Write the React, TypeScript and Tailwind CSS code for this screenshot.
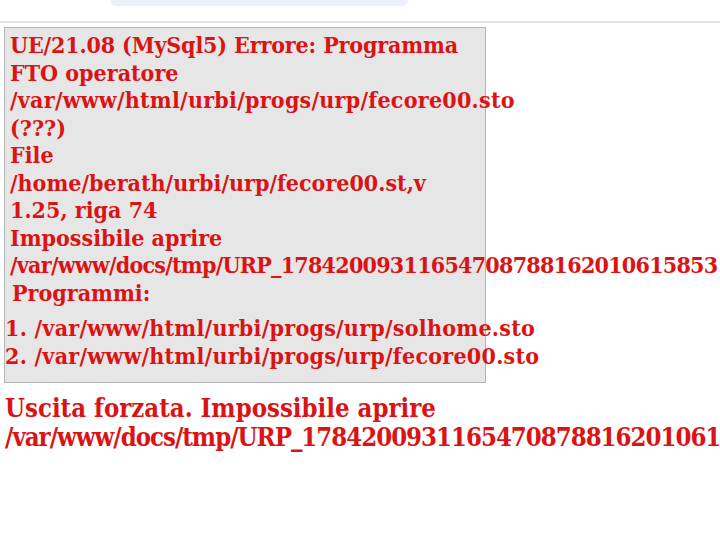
import React from "react";

export default function App() {
  const lines = [
    { t: "UE/21.08 (MySql5) Errore: Programma", c: "tracking-[-0.15px]" },
    { t: "FTO operatore", c: "" },
    { t: "/var/www/html/urbi/progs/urp/fecore00.sto", c: "tracking-[0.25px]" },
    { t: "(???)", c: "" },
    { t: "File", c: "" },
    { t: "/home/berath/urbi/urp/fecore00.st,v", c: "" },
    { t: "1.25, riga 74", c: "" },
    { t: "Impossibile aprire", c: "" },
    { t: "/var/www/docs/tmp/URP_17842009311654708788162010615853", c: "tracking-[-0.75px]" },
  ];

  return (
    <div className="w-[720px] h-[533px] overflow-hidden bg-white font-['DejaVu_Serif_Condensed','DejaVu_Serif',serif] font-bold text-[#da1414]">
      {/* browser chrome remnant */}
      <div className="h-[23px] border-b-2 border-[#e4e4e4] flex">
        <div className="ml-[110px] w-[298px] h-[6px] rounded-b-[14px] bg-[#edf0f8]" />
      </div>

      <div className="mt-[4px] ml-[4px] w-[482px] h-[356px] bg-[#e6e6e6] border border-[#b4b4b4] pt-[3px] whitespace-nowrap text-[23px] leading-[27.5px]">
        <div className="pl-[5px]">
          {lines.map((l, i) => (
            <div key={i} className={l.c}>
              {l.t}
            </div>
          ))}
          <div className="pl-[2px]">Programmi:</div>
        </div>
        <ol className="mt-[8px] tracking-[0.25px]">
          <li>1. /var/www/html/urbi/progs/urp/solhome.sto</li>
          <li>2. /var/www/html/urbi/progs/urp/fecore00.sto</li>
        </ol>
      </div>

      <div className="mt-[11px] pl-[5px] whitespace-nowrap text-[25.5px] leading-[29px]">
        <div>Uscita forzata. Impossibile aprire</div>
        <div className="tracking-[-1px]">/var/www/docs/tmp/URP_1784200931165470878816201061</div>
      </div>
    </div>
  );
}
